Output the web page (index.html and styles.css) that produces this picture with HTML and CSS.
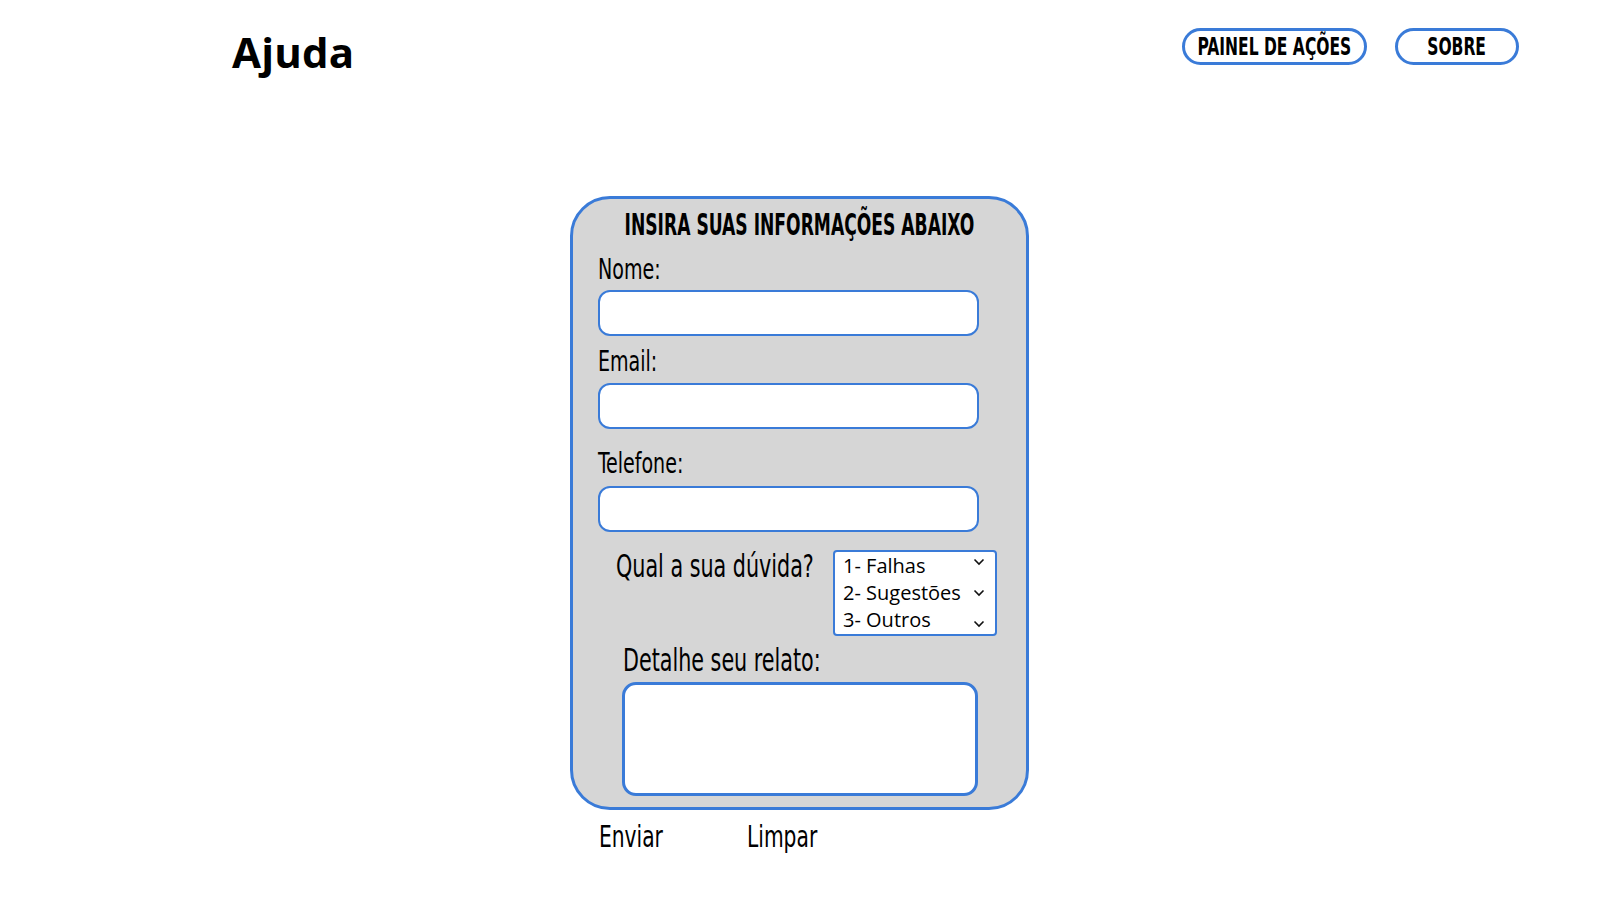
FILE: index.html
```html
<!DOCTYPE html>
<html lang="pt">
<head>
<meta charset="utf-8">
<title>Ajuda</title>
<link rel="stylesheet" href="styles.css">
</head>
<body>
<header class="top">
  <h1 class="page-title">Ajuda</h1>
  <nav class="nav">
    <a class="nav-btn nav-painel" href="#"><span class="squeeze">PAINEL DE AÇÕES</span></a>
    <a class="nav-btn nav-sobre" href="#"><span class="squeeze">SOBRE</span></a>
  </nav>
</header>
<main class="main">
  <form class="card">
    <h2 class="card-title"><span class="squeeze">INSIRA SUAS INFORMAÇÕES ABAIXO</span></h2>
    <label class="lbl lbl-nome">Nome:</label>
    <div class="field"></div>
    <label class="lbl lbl-email">Email:</label>
    <div class="field"></div>
    <label class="lbl lbl-tel">Telefone:</label>
    <div class="field"></div>
    <div class="question">
      <span class="q-label">Qual a sua dúvida?</span>
      <div class="options">
        <div class="opt"><span>1- Falhas</span><svg class="chev chev-1" width="12" height="8" viewBox="0 0 12 8"><path d="M1.5 1.5 L6 6 L10.5 1.5" fill="none" stroke="#111" stroke-width="1.6"/></svg></div>
        <div class="opt"><span>2- Sugestões</span><svg class="chev chev-2" width="12" height="8" viewBox="0 0 12 8"><path d="M1.5 1.5 L6 6 L10.5 1.5" fill="none" stroke="#111" stroke-width="1.6"/></svg></div>
        <div class="opt"><span>3- Outros</span><svg class="chev chev-3" width="12" height="8" viewBox="0 0 12 8"><path d="M1.5 1.5 L6 6 L10.5 1.5" fill="none" stroke="#111" stroke-width="1.6"/></svg></div>
      </div>
    </div>
    <label class="lbl lbl-detalhe">Detalhe seu relato:</label>
    <div class="textbox"></div>
  </form>
  <div class="actions">
    <span class="act act-enviar">Enviar</span>
    <span class="act act-limpar">Limpar</span>
  </div>
</main>
</body>
</html>
```
FILE: styles.css
```css
* { box-sizing: border-box; }
html, body { margin: 0; padding: 0; background: #fff; }
body { width: 1600px; height: 900px; overflow: hidden; color: #000; font-family: "DejaVu Sans Condensed", "DejaVu Sans", sans-serif; }

.top { display: flex; justify-content: space-between; align-items: flex-start; padding: 28px 81px 0 232px; height: 65px; }
.page-title { margin: 3px 0 0; font-family: "Open Sans", sans-serif; font-weight: 700; font-size: 42px; line-height: 42px; letter-spacing: 0.2px; }
.nav { display: flex; gap: 28px; }
.nav-btn { display: flex; align-items: center; justify-content: center; height: 37px; border: 3px solid #3a7bd8; border-radius: 19px; color: #000; text-decoration: none; font-weight: 700; font-size: 25px; line-height: 25px; }
.nav-painel { width: 185px; }
.nav-sobre { width: 124px; }
.nav-btn .squeeze { transform: scaleX(0.69); white-space: nowrap; }
.squeeze { display: inline-block; flex: none; }

.main { padding-left: 570px; margin-top: 131px; }
.card { display: flex; flex-direction: column; align-items: flex-start; width: 459px; height: 614px; margin: 0; padding: 11px 0 0 25px; background: #d6d6d6; border: 3px solid #3a7bd8; border-radius: 40px; }
.card-title { display: flex; justify-content: center; align-self: stretch; margin: 0 0 15px -25px; font-weight: 700; font-size: 30px; line-height: 30px; }
.card-title .squeeze { transform: scaleX(0.635); white-space: nowrap; }

.lbl { display: block; font-size: 29px; line-height: 29px; white-space: nowrap; transform: scaleX(0.73); transform-origin: left center; }
.lbl-nome { margin-bottom: 6px; }
.lbl-email { margin-top: 11px; margin-bottom: 7px; }
.lbl-tel { margin-top: 20px; margin-bottom: 8px; }
.field { width: 381px; height: 46px; background: #fff; border: 2px solid #3a7bd8; border-radius: 12px; }

.question { display: flex; align-items: flex-start; margin: 18px 0 0 18px; }
.q-label { display: block; flex: none; width: 217px; margin-top: 1px; font-size: 31.5px; line-height: 31px; white-space: nowrap; transform: scaleX(0.73); transform-origin: left center; }
.options { width: 164px; height: 86px; padding: 0 0 0 8px; background: #fff; border: 2px solid #3a7bd8; border-radius: 4px; font-family: "Open Sans", sans-serif; font-size: 20px; }
.opt { position: relative; height: 27px; line-height: 27px; white-space: nowrap; }
.chev { position: absolute; right: 10px; }
.chev-1 { top: 6px; }
.chev-2 { top: 10px; }
.chev-3 { top: 14px; }

.lbl-detalhe { margin: 9px 0 6px 25px; font-size: 31.5px; line-height: 31px; }
.textbox { width: 356px; height: 114px; margin-left: 24px; background: #fff; border: 3px solid #3a7bd8; border-radius: 14px; }

.actions { display: flex; margin-top: 12px; padding-left: 29px; font-size: 30px; line-height: 30px; }
.act { display: block; white-space: nowrap; transform: scaleX(0.75); transform-origin: left center; }
.act-enviar { width: 148px; }
```
